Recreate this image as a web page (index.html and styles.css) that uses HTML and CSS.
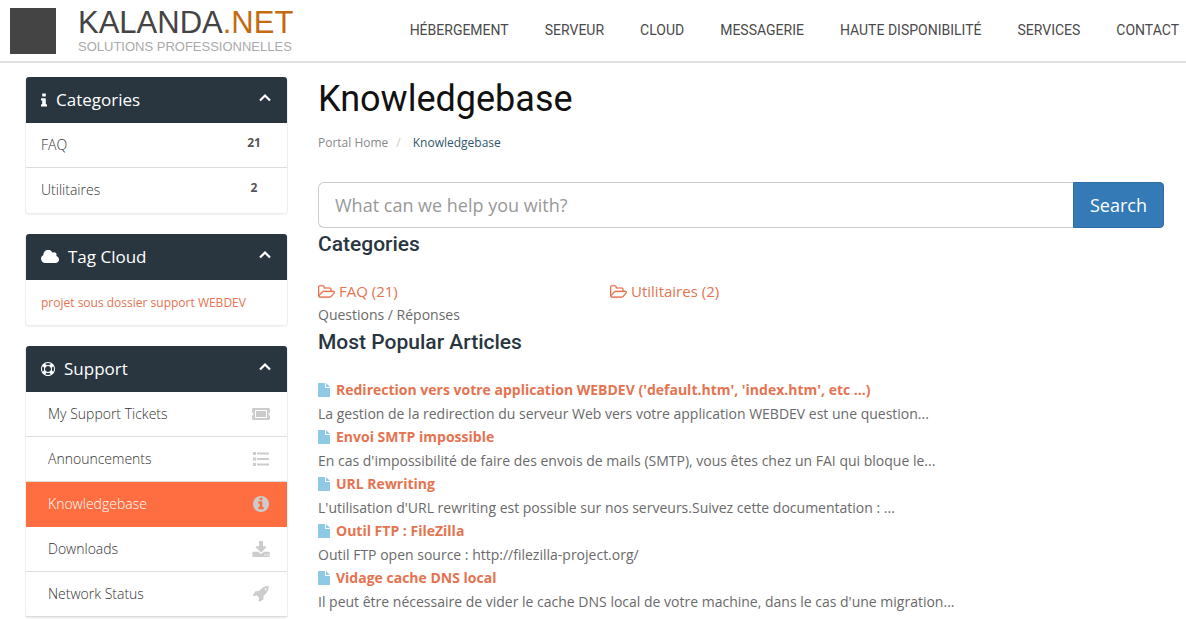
FILE: index.html
```html
<!DOCTYPE html>
<html lang="fr">
  <head>
    <meta charset="UTF-8" />
    <meta name="viewport" content="width=device-width, initial-scale=1.0" />
    <title>Knowledgebase - Kalanda.net</title>
    <link rel="stylesheet" href="styles.css">
  </head>
  <body>
    <!-- Icon set -->
    <svg class="icon-defs" xmlns="http://www.w3.org/2000/svg">
      <symbol id="i-info" viewBox="576 128 640 1408"><path d="M1216 1344v128q0 26-19 45t-45 19h-512q-26 0-45-19t-19-45v-128q0-26 19-45t45-19h64v-384h-64q-26 0-45-19t-19-45v-128q0-26 19-45t45-19h384q26 0 45 19t19 45v576h64q26 0 45 19t19 45zm-128-1152v192q0 26-19 45t-45 19h-256q-26 0-45-19t-19-45v-192q0-26 19-45t45-19h256q26 0 45 19t19 45z"/></symbol>
      <symbol id="i-cloud" viewBox="64 256 1920 1280"><path d="M1984 1152q0 159-112.5 271.5t-271.5 112.5h-1088q-185 0-316.5-131.5t-131.5-316.5q0-132 71-241.5t187-163.5q-2-28-2-43 0-212 150-362t362-150q158 0 286.5 88t187.5 230q70-62 166-62 106 0 181 75t75 181q0 75-41 138 129 30 213 134.5t84 239.5z"/></symbol>
      <symbol id="i-ring" viewBox="0 0 1792 1792"><path d="M896 0q182 0 348 71t286 191 191 286 71 348-71 348-191 286-286 191-348 71-348-71-286-191-191-286-71-348 71-348 191-286 286-191 348-71zm0 128q-190 0-361 90l194 194q82-28 167-28t167 28l194-194q-171-90-361-90zm-678 1129l194-194q-28-82-28-167t28-167l-194-194q-90 171-90 361t90 361zm678 407q190 0 361-90l-194-194q-82 28-167 28t-167-28l-194 194q171 90 361 90zm0-384q159 0 271.5-112.5t112.5-271.5-112.5-271.5-271.5-112.5-271.5 112.5-112.5 271.5 112.5 271.5 271.5 112.5zm484-217l194 194q90-171 90-361t-90-361l-194 194q28 82 28 167t-28 167z"/></symbol>
      <symbol id="i-up" viewBox="0 0 14 14"><path d="M2 9.500l5-5 5 5" fill="none" stroke="currentColor" stroke-width="2.200"/></symbol>
      <symbol id="i-ticket" viewBox="0 0 576 512"><path d="M128 160h320v192H128V160zm400 96c0 26.510 21.490 48 48 48v96c0 26.510-21.490 48-48 48H48c-26.510 0-48-21.490-48-48v-96c26.510 0 48-21.490 48-48s-21.490-48-48-48v-96c0-26.510 21.490-48 48-48h480c26.510 0 48 21.490 48 48v96c-26.510 0-48 21.490-48 48zm-48-104c0-13.255-10.745-24-24-24H120c-13.255 0-24 10.745-24 24v208c0 13.255 10.745 24 24 24h336c13.255 0 24-10.745 24-24V152z"/></symbol>
      <symbol id="i-list" viewBox="0 0 18 16"><path d="M1 1h3v3H1zM5 1.500h12v2H5zM1 6.500h3v3H1zM5 7h12v2H5zM1 12h3v3H1zM5 12.500h12v2H5z"/></symbol>
      <symbol id="i-circle" viewBox="128 128 1536 1536"><path d="M1152 1376v-160q0-14-9-23t-23-9h-96v-512q0-14-9-23t-23-9h-320q-14 0-23 9t-9 23v160q0 14 9 23t23 9h96v320h-96q-14 0-23 9t-9 23v160q0 14 9 23t23 9h448q14 0 23-9t9-23zm-128-896v-160q0-14-9-23t-23-9h-192q-14 0-23 9t-9 23v160q0 14 9 23t23 9h192q14 0 23-9t9-23zm640 416q0 209-103 385.500t-279.500 279.500-385.500 103-385.500-103-279.500-279.500-103-385.500 103-385.500 279.500-279.500 385.500-103 385.500 103 279.500 279.500 103 385.500z"/></symbol>
      <symbol id="i-download" viewBox="64 0 1664 1536"><path d="M1344 1344q0-26-19-45t-45-19-45 19-19 45 19 45 45 19 45-19 19-45zm256 0q0-26-19-45t-45-19-45 19-19 45 19 45 45 19 45-19 19-45zm128-224v320q0 40-28 68t-68 28h-1472q-40 0-68-28t-28-68v-320q0-40 28-68t68-28h465l135 136q58 56 136 56t136-56l136-136h464q40 0 68 28t28 68zm-325-569q17 41-14 70l-448 448q-18 19-45 19t-45-19l-448-448q-31-29-14-70 17-39 59-39h256v-448q0-26 19-45t45-19h256q26 0 45 19t19 45v448h256q42 0 59 39z"/></symbol>
      <symbol id="i-rocket" viewBox="64 128 1600 1664"><path d="M1440 448q0-40-28-68t-68-28-68 28-28 68 28 68 68 28 68-28 28-68zm224-288q0 249-75.500 430.500t-253.500 360.500q-81 80-195 176l-20 379q-2 16-16 26l-384 224q-7 4-16 4-12 0-23-9l-64-64q-13-14-8-32l85-276-281-281-276 85q-3 1-9 1-14 0-23-9l-64-64q-17-19-5-39l224-384q10-14 26-16l379-20q96-114 176-195 188-187 358-258t431-71q14 0 24 9.500t10 22.500z"/></symbol>
      <symbol id="i-folder" viewBox="64 0 1920 1792"><path d="M1845 931q0-35-53-35h-1088q-40 0-85.500 21.500t-71.500 52.500l-294 363q-18 24-18 40 0 35 53 35h1088q40 0 86-22t71-53l294-363q18-22 18-39zm-1141-163h768v-160q0-40-28-68t-68-28h-576q-40 0-68-28t-28-68v-64q0-40-28-68t-68-28h-320q-40 0-68 28t-28 68v853l256-315q44-53 116-87.500t140-34.500zm1269 163q0 62-46 120l-295 363q-43 53-116 87.500t-140 34.500h-1088q-92 0-158-66t-66-158v-960q0-92 66-158t158-66h320q92 0 158 66t66 158v32h544q92 0 158 66t66 158v160h192q54 0 99 24.500t67 70.500q15 32 15 68z" stroke="currentColor" stroke-width="30"/></symbol>
      <symbol id="i-file" viewBox="0 0 12 14"><path d="M.5 0H7v4.500q0 .5.500.5H12v8.500q0 .5-.5.500H.5q-.5 0-.5-.5V.5Q0 0 .5 0zM8 0l4 4H8z"/></symbol>
    </svg>

    <header class="site-header">
      <a class="brand" href="#">
        <span class="brand-square"></span>
        <span class="brand-text">
          <span class="brand-name">KALANDA<span class="brand-tld">.NET</span></span>
          <span class="brand-tagline">SOLUTIONS PROFESSIONNELLES</span>
        </span>
      </a>
      <nav class="main-nav">
        <a href="#">HÉBERGEMENT</a>
        <a href="#">SERVEUR</a>
        <a href="#">CLOUD</a>
        <a href="#">MESSAGERIE</a>
        <a href="#">HAUTE DISPONIBILITÉ</a>
        <a href="#">SERVICES</a>
        <a href="#">CONTACT</a>
      </nav>
    </header>

    <div class="container">
      <aside class="sidebar">
        <section class="panel">
          <h3 class="panel-heading">
            <svg class="icon icon-narrow"><use href="#i-info"/></svg>
            Categories
            <svg class="icon chevron"><use href="#i-up"/></svg>
          </h3>
          <a class="item" href="#">FAQ <span class="badge">21</span></a>
          <a class="item" href="#">Utilitaires <span class="badge">2</span></a>
        </section>

        <section class="panel">
          <h3 class="panel-heading">
            <svg class="icon icon-cloud"><use href="#i-cloud"/></svg>
            Tag Cloud
            <svg class="icon chevron"><use href="#i-up"/></svg>
          </h3>
          <div class="tags">
            <a href="#">projet</a>
            <a href="#">sous dossier</a>
            <a href="#">support</a>
            <a href="#">WEBDEV</a>
          </div>
        </section>

        <section class="panel panel-support">
          <h3 class="panel-heading">
            <svg class="icon"><use href="#i-ring"/></svg>
            Support
            <svg class="icon chevron"><use href="#i-up"/></svg>
          </h3>
          <a class="item" href="#">My Support Tickets <svg class="item-icon"><use href="#i-ticket"/></svg></a>
          <a class="item" href="#">Announcements <svg class="item-icon"><use href="#i-list"/></svg></a>
          <a class="item active" href="#">Knowledgebase <svg class="item-icon"><use href="#i-circle"/></svg></a>
          <a class="item" href="#">Downloads <svg class="item-icon"><use href="#i-download"/></svg></a>
          <a class="item" href="#">Network Status <svg class="item-icon"><use href="#i-rocket"/></svg></a>
        </section>
      </aside>

      <main class="content">
        <h1>Knowledgebase</h1>
        <ol class="breadcrumb">
          <li><a href="#">Portal Home</a></li>
          <li class="current">Knowledgebase</li>
        </ol>

        <form class="search">
          <input type="text" aria-label="Search the knowledgebase" placeholder="What can we help you with?" />
          <button type="submit">Search</button>
        </form>

        <h2>Categories</h2>
        <div class="categories">
          <div>
            <a href="#"><svg class="icon icon-folder"><use href="#i-folder"/></svg>FAQ (21)</a>
            <p>Questions / Réponses</p>
          </div>
          <div>
            <a href="#"><svg class="icon icon-folder"><use href="#i-folder"/></svg>Utilitaires (2)</a>
          </div>
        </div>

        <h2>Most Popular Articles</h2>
        <div class="articles">
          <a href="#"><svg class="icon-file"><use href="#i-file"/></svg>Redirection vers votre application WEBDEV ('default.htm', 'index.htm', etc ...)</a>
          <p>La gestion de la redirection du serveur Web vers votre application WEBDEV est une question...</p>
          <a href="#"><svg class="icon-file"><use href="#i-file"/></svg>Envoi SMTP impossible</a>
          <p>En cas d'impossibilité de faire des envois de mails (SMTP), vous êtes chez un FAI qui bloque le...</p>
          <a href="#"><svg class="icon-file"><use href="#i-file"/></svg>URL Rewriting</a>
          <p>L'utilisation d'URL rewriting est possible sur nos serveurs.Suivez cette documentation : ...</p>
          <a href="#"><svg class="icon-file"><use href="#i-file"/></svg>Outil FTP : FileZilla</a>
          <p>Outil FTP open source : http://filezilla-project.org/</p>
          <a href="#"><svg class="icon-file"><use href="#i-file"/></svg>Vidage cache DNS local</a>
          <p>Il peut être nécessaire de vider le cache DNS local de votre machine, dans le cas d'une migration...</p>
        </div>
      </main>
    </div>
  </body>
</html>
```
FILE: styles.css
```css
:root {
  --dark: #293640;
  --orange: #ff6e40;
  --link: #e57350;
  --text: #6a6a6a;
  --border: #ddd;
}
* {
  box-sizing: border-box;
}
body {
  margin: 0;
  font-family: "Open Sans", sans-serif;
  font-size: 14px;
  line-height: 20px;
  color: var(--text);
  background-color: #fff;
}
a {
  color: inherit;
  text-decoration: none;
}
p {
  margin: 0;
}
.icon-defs {
  display: none;
}
svg {
  fill: currentColor;
  flex: none;
}
.icon {
  width: 14px;
  height: 14px;
}

/* header */
.site-header {
  display: flex;
  justify-content: space-between;
  height: 63px;
  padding: 8px 7px 0 10px;
  border-bottom: 2px solid #e0e0e0;
}
.brand {
  display: flex;
  gap: 22px;
}
.brand-square {
  width: 46px;
  height: 46px;
  background-color: #444;
}
.brand-text {
  display: flex;
  flex-direction: column;
  font-family: "Liberation Sans", Arial, sans-serif;
  white-space: nowrap;
}
.brand-name {
  font-size: 31px;
  line-height: 30px;
  color: #444;
}
.brand-tld {
  color: #c46a12;
}
.brand-tagline {
  font-size: 13px;
  line-height: 18px;
  color: #aaa;
}
.main-nav {
  display: flex;
  gap: 36px;
  padding-top: 12px;
  font-family: Roboto, sans-serif;
  color: #4a4a4a;
  white-space: nowrap;
}

/* layout */
.container {
  display: grid;
  grid-template-columns: 263px 1fr;
  gap: 30px;
  padding: 14px 22px 0 25px;
}

/* sidebar */
.panel {
  margin-bottom: 20px;
  border: 1px solid #eee;
  border-top: 0;
  border-radius: 4px;
  box-shadow: 0 1px 1px rgba(0, 0, 0, 0.05);
}
.panel-heading {
  display: flex;
  align-items: center;
  gap: 9px;
  height: 46px;
  margin: 0;
  padding: 0 15px;
  border-radius: 3px 3px 0 0;
  background-color: var(--dark);
  color: #fff;
  font-size: 17px;
  font-weight: 400;
}
.icon-narrow {
  width: 6px;
}
.icon-cloud {
  width: 18px;
}
.chevron {
  margin: 0 0 4px auto;
}
.item {
  display: flex;
  justify-content: space-between;
  align-items: center;
  height: 45px;
  padding: 0 15px;
  border-bottom: 1px solid var(--border);
  font-weight: 300;
  color: #333;
}
.item:last-child {
  border-bottom-color: transparent;
}
.badge {
  min-width: 36px;
  padding-bottom: 4px;
  font-size: 12px;
  font-weight: 700;
  text-align: center;
  color: #555;
}
.tags {
  padding: 13px 15px 12px;
  font-size: 12px;
  color: var(--link);
}
.panel-support .item {
  padding: 0 17px 0 22px;
}
.panel-support .item:last-child {
  border-bottom-color: var(--border);
}
.item-icon {
  width: 18px;
  height: 16px;
  color: #ccc;
}
.panel-support .active {
  background-color: var(--orange);
  border-color: var(--orange);
  color: #fff;
}

/* main column */
h1,
h2 {
  margin: 0;
  font-family: Roboto, sans-serif;
}
h1 {
  font-size: 36px;
  font-weight: 400;
  line-height: 44px;
  color: #111;
}
h2 {
  font-size: 21px;
  font-weight: 500;
  line-height: 32px;
  color: var(--dark);
}
.breadcrumb {
  display: flex;
  margin: 12px 0 29px;
  padding: 0;
  list-style: none;
  font-size: 12px;
  color: #888;
}
.breadcrumb .current {
  color: #31566b;
}
.breadcrumb .current::before {
  content: "/";
  padding: 0 12px 0 8px;
  color: #ccc;
}
.search {
  display: flex;
}
.search input,
.search button {
  height: 46px;
  padding: 0 16px;
  font: 18px/24px "Open Sans", sans-serif;
}
.search input {
  flex: 1;
  min-width: 0;
  border: 1px solid #ccc;
  border-right: 0;
  border-radius: 6px 0 0 6px;
  color: #555;
}
.search input::placeholder {
  color: #999;
}
.search button {
  border: 1px solid #2e6da4;
  border-radius: 0 4px 4px 0;
  background-color: #337ab7;
  color: #fff;
}
.categories {
  display: grid;
  grid-template-columns: repeat(3, 1fr);
  gap: 30px;
  padding-top: 20px;
  line-height: 23px;
}
.categories a {
  display: flex;
  align-items: center;
  gap: 4px;
  font-size: 15px;
  color: var(--link);
}
.icon-folder {
  width: 17px;
  height: 16px;
}
.articles {
  padding-top: 20px;
}
.articles a {
  display: flex;
  align-items: center;
  gap: 6px;
  line-height: 24px;
  font-weight: 700;
  color: var(--link);
}
.articles p {
  line-height: 23px;
}
.icon-file {
  width: 12px;
  height: 14px;
  color: #8ecae6;
}
```
